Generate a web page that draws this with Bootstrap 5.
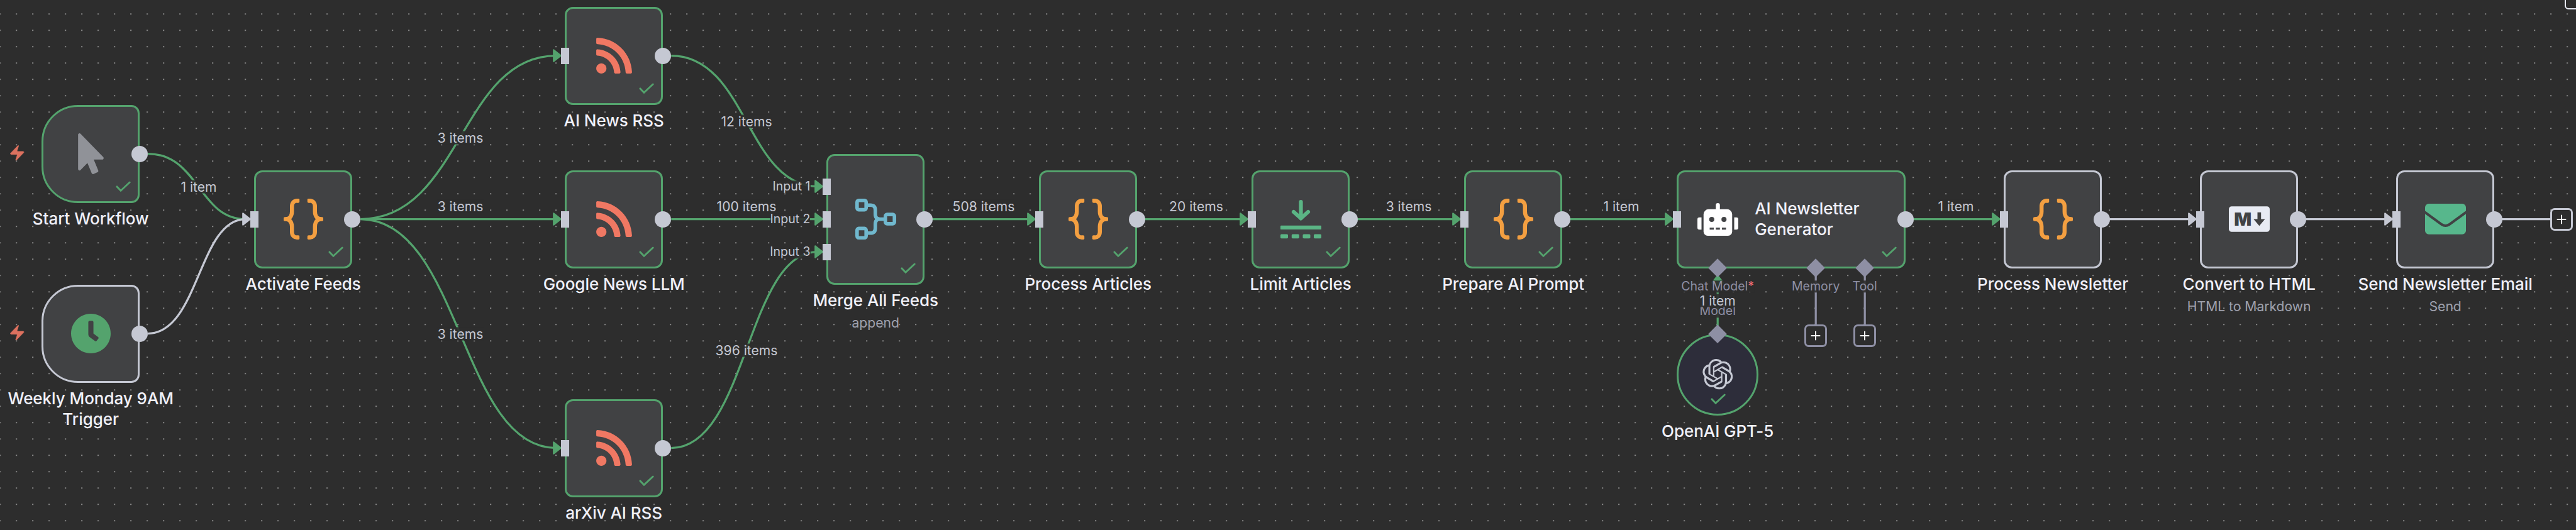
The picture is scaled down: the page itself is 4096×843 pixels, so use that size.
<!DOCTYPE html>
<html lang="en" data-bs-theme="dark">
<head>
<meta charset="utf-8">
<title>AI Newsletter Workflow</title>
<meta name="viewport" content="width=device-width, initial-scale=1">
<link href="https://cdn.jsdelivr.net/npm/bootstrap@5.3.0/dist/css/bootstrap.min.css" rel="stylesheet">
<style>
  :root { --u: 26px; --ok: #54a36d; --idle: #c5c8d3; --sub: #8e8fa4; --canvas: #2d2d2d; --face: #414244; }
  body { background: var(--canvas); font-family: Inter, "Liberation Sans", sans-serif; }
  .flow { width: 4096px; height: 843px; }
  .flow > svg.wires { width: 4096px; height: 843px; }
  .wires path.w { fill: none; stroke: var(--ok); stroke-width: 3.25; }
  .wires path.w.idle { stroke: var(--idle); }
  .wires path.w.sub { stroke: var(--sub); }
  /* nodes sit on a 26px grid */
  .step { left: calc(66.2px + var(--u) * var(--c)); top: calc(348.5px + var(--u) * var(--r)); width: 156px; height: 156px;
    margin-top: -78px; background: var(--face); border: 3px solid var(--ok); border-radius: 13px; }
  .step.idle { border-color: var(--idle); }
  .step.trigger { border-radius: 58px 13px 13px 58px; }
  .step.tall { height: 208px; margin-top: -104px; }
  .step.agent { width: 364px; }
  .step.disc { width: 130px; height: 130px; margin-top: 0; border-radius: 50%; background: #2d2d3a; }
  .name { top: calc(100% + 12.6px); left: 50%; transform: translateX(-50%); font-size: 26px; line-height: 32.5px; font-weight: 500; letter-spacing: -.05px; color: #f0f0f8; }
  .kind { font-size: 21.1px; line-height: 26px; font-weight: 400; letter-spacing: 0; color: #9fa1ad; margin-top: 6.5px; }
  .agent-title { font-size: 26px; line-height: 32.5px; font-weight: 500; color: #f0f0f8; }
  .out { width: 26px; height: 26px; right: -16px; top: calc(50% - 13px); background: var(--idle); }
  .in { width: 13px; height: 26px; left: -9.5px; top: calc(50% - 13px); background: var(--idle); }
  .tick { width: 24px; height: 18px; right: 11.6px; bottom: 13.2px; }
  .disc .tick { right: auto; left: 50%; margin-left: -11.6px; bottom: 14px; }
  .bolt { width: 28.5px; height: 28.5px; left: -56.5px; top: calc(50% - 15.5px); }
  .count, .port, .hint { font-size: 19.5px; line-height: 21px; color: var(--idle); background: rgba(45,45,45,.9); transform: translate(-50%,-50%); }
  .count { font-size: 21.1px; }
  .port { color: var(--sub); line-height: 19.5px; }
  .hint { transform: translate(-100%,-50%); line-height: 19.5px; }
  .plus { width: 36px; height: 36px; border: 3px solid var(--sub); border-radius: 7px; transform: translate(-50%,-50%); background: var(--canvas); }
  .plus.idle { border-color: var(--idle); }
  .gem { width: 20.8px; height: 20.8px; background: var(--sub); transform: translate(-50%,-50%) rotate(45deg); }
  .corner { left: 4078px; top: -22px; width: 38px; height: 36.5px; border: 2px solid #e6e9f2; border-radius: 6px; }
</style>
</head>
<body class="m-0 overflow-hidden">
<svg class="d-none" xmlns="http://www.w3.org/2000/svg">
  <symbol id="i-code" viewBox="0 0 63 65">
    <g fill="none" stroke="#f39f41" stroke-width="6.4">
      <path d="M23.6 3.3H21.5C16 3.3 13.2 7 13.2 12V20.5C13.2 27.5 9.5 32.5 3.2 32.5C9.5 32.5 13.2 37.5 13.2 44.5V53C13.2 58 16 61.7 21.5 61.7H23.6"/>
      <path d="M39.4 3.3H41.5C47 3.3 49.8 7 49.8 12V20.5C49.8 27.5 53.5 32.5 59.8 32.5C53.5 32.5 49.8 37.5 49.8 44.5V53C49.8 58 47 61.7 41.5 61.7H39.4"/>
    </g>
    <g fill="#f39f41"><rect y="29.3" width="9" height="6.4" rx="1.6"/><rect x="54" y="29.3" width="9" height="6.4" rx="1.6"/><rect x="20" y=".1" width="5.2" height="6.4" rx="1.4"/><rect x="20" y="58.5" width="5.2" height="6.4" rx="1.4"/><rect x="37.8" y=".1" width="5.2" height="6.4" rx="1.4"/><rect x="37.8" y="58.5" width="5.2" height="6.4" rx="1.4"/></g>
  </symbol>
  <symbol id="i-rss" viewBox="0 0 448 512"><path fill="#f07863" d="M128.081 415.959c0 35.369-28.672 64.041-64.041 64.041S0 451.328 0 415.959s28.672-64.041 64.041-64.041 64.04 28.673 64.04 64.041zm175.66 47.25c-8.354-154.6-132.185-278.587-286.95-286.95C7.656 175.765 0 183.105 0 192.253v48.069c0 8.415 6.49 15.472 14.887 16.018 111.832 7.284 201.473 96.702 208.772 208.772.547 8.397 7.604 14.887 16.018 14.887h48.069c9.149.001 16.489-7.655 15.995-16.79zm144.249.288C439.596 229.677 251.465 40.445 16.503 32.01 7.473 31.686 0 38.981 0 48.016v48.068c0 8.625 6.835 15.645 15.453 15.999 191.179 7.839 344.627 161.316 352.465 352.465.353 8.618 7.373 15.453 15.999 15.453h48.068c9.034-.001 16.329-7.474 16.005-16.504z"/></symbol>
  <symbol id="i-cursor" viewBox="0 0 320 512"><path fill="#909298" d="M302.189 329.126H196.105l55.831 135.993c3.889 9.428-.555 19.999-9.444 23.999l-49.165 21.427c-9.165 4-19.443-.571-23.332-9.714l-53.053-129.136-86.664 89.138C18.729 472.71 0 463.554 0 447.977V18.299C0 1.899 19.921-6.096 30.277 5.443l284.412 292.542c11.472 11.179 3.007 31.141-12.5 31.141z"/></symbol>
  <symbol id="i-clock" viewBox="0 0 512 512"><path fill="#54a36d" d="M256 8C119 8 8 119 8 256S119 504 256 504 504 393 504 256 393 8 256 8Zm92.49 313l-20 25a16 16 0 0 1-22.49 2.5l-67-49.72a40 40 0 0 1-15-31.23V112a16 16 0 0 1 16-16h32a16 16 0 0 1 16 16V256l58 42.5A16 16 0 0 1 348.49 321Z"/></symbol>
  <symbol id="i-merge" viewBox="0 0 65 65"><g fill="none" stroke="#70b8ce" stroke-width="5.6"><rect x="2.8" y="2.8" width="14.4" height="14.8" rx="2.6"/><rect x="2.8" y="47.4" width="14.4" height="14.8" rx="2.6"/><rect x="47.8" y="25.1" width="14.4" height="14.8" rx="2.6"/><path d="M19 10.2H24Q31.8 10.2 31.8 18V24.5Q31.8 32.5 39 32.5H46M19 54.8H24Q31.8 54.8 31.8 47V40.5Q31.8 32.5 39 32.5"/></g></symbol>
  <symbol id="i-limit" viewBox="0 0 65 65"><g fill="none" stroke="#5bb585" stroke-width="6.2" stroke-linecap="round"><path d="M32.5 5V31"/><path d="M21 21L32.5 31.2L44 21"/></g><g fill="#5bb585"><rect y="42.7" width="65" height="6.4" rx="1.2"/><rect y="56.5" width="12" height="6.7" rx="1.6"/><rect x="17.8" y="56.5" width="12" height="6.7" rx="1.6"/><rect x="35.5" y="56.5" width="12" height="6.7" rx="1.6"/><rect x="53" y="56.5" width="12" height="6.7" rx="1.6"/></g></symbol>
  <symbol id="i-robot" viewBox="0 0 640 512"><path fill="#fff" d="M32,224H64V416H32A31.96,31.96,0,0,1,0,384V256A31.96,31.96,0,0,1,32,224Zm512-48V448a64.06,64.06,0,0,1-64,64H160a64.06,64.06,0,0,1-64-64V176a79.974,79.974,0,0,1,80-80H288V32a32,32,0,0,1,64,0V96H464A79.974,79.974,0,0,1,544,176ZM264,256a40,40,0,1,0-40,40A39.997,39.997,0,0,0,264,256Zm-8,128H192v32h64Zm96,0H288v32h64ZM456,256a40,40,0,1,0-40,40A39.997,39.997,0,0,0,456,256Zm-8,128H384v32h64ZM640,256V384a31.96,31.96,0,0,1-32,32H576V224h32A31.96,31.96,0,0,1,640,256Z"/></symbol>
  <symbol id="i-md" viewBox="0 0 65 41"><rect width="65" height="40.6" y=".2" rx="4.5" fill="#e8ebf4"/><text x="8.2" y="31" textLength="28" lengthAdjust="spacingAndGlyphs" font-family="Inter, sans-serif" font-weight="900" font-size="29" fill="#414244">M</text><path fill="#414244" d="M45.5 9.8H51.2V20.4H57.5L48.4 31.2L39.3 20.4H45.5Z"/></symbol>
  <symbol id="i-mail" viewBox="0 0 65 49"><rect width="65" height="48.8" rx="6" fill="#57b78c"/><path fill="none" stroke="#414244" stroke-width="4" d="M-2 12.2L26.5 33Q32.5 37 38.5 33L67 12.2"/></symbol>
  <symbol id="i-openai" viewBox="0 0 24 24"><path fill="#c5c8d3" d="M22.2819 9.8211a5.9847 5.9847 0 0 0-.5157-4.9108 6.0462 6.0462 0 0 0-6.5098-2.9A6.0651 6.0651 0 0 0 4.9807 4.1818a5.9847 5.9847 0 0 0-3.9977 2.9 6.0462 6.0462 0 0 0 .7427 7.0966 5.98 5.98 0 0 0 .511 4.9107 6.051 6.051 0 0 0 6.5146 2.9001A5.9847 5.9847 0 0 0 13.2599 24a6.0557 6.0557 0 0 0 5.7718-4.2058 5.9894 5.9894 0 0 0 3.9977-2.9001 6.0557 6.0557 0 0 0-.7475-7.0729zm-9.022 12.6081a4.4755 4.4755 0 0 1-2.8764-1.0408l.1419-.0804 4.7783-2.7582a.7948.7948 0 0 0 .3927-.6813v-6.7369l2.02 1.1686a.071.071 0 0 1 .038.052v5.5826a4.504 4.504 0 0 1-4.4945 4.4944zm-9.6607-4.1254a4.4708 4.4708 0 0 1-.5346-3.0137l.142.0852 4.783 2.7582a.7712.7712 0 0 0 .7806 0l5.8428-3.3685v2.3324a.0804.0804 0 0 1-.0332.0615L9.74 19.9502a4.4992 4.4992 0 0 1-6.1408-1.6464zM2.3408 7.8956a4.485 4.485 0 0 1 2.3655-1.9728V11.6a.7664.7664 0 0 0 .3879.6765l5.8144 3.3543-2.0201 1.1685a.0757.0757 0 0 1-.071 0l-4.8303-2.7865A4.504 4.504 0 0 1 2.3408 7.872zm16.5963 3.8558L13.1038 8.364 15.1192 7.2a.0757.0757 0 0 1 .071 0l4.8303 2.7913a4.4944 4.4944 0 0 1-.6765 8.1042v-5.6772a.79.79 0 0 0-.407-.667zm2.0107-3.0231l-.142-.0852-4.7735-2.7818a.7759.7759 0 0 0-.7854 0L9.409 9.2297V6.8974a.0662.0662 0 0 1 .0284-.0615l4.8303-2.7866a4.4992 4.4992 0 0 1 6.6802 4.66zM8.3065 12.863l-2.02-1.1638a.0804.0804 0 0 1-.038-.0567V6.0742a4.4992 4.4992 0 0 1 7.3757-3.4537l-.142.0805L8.704 5.459a.7948.7948 0 0 0-.3927.6813zm1.0976-2.3654l2.602-1.4998 2.6069 1.4998v2.9994l-2.5974 1.4997-2.6067-1.4997Z"/></symbol>
  <symbol id="i-tick" viewBox="0 0 24 18"><path fill="none" stroke="#54a36d" stroke-width="2.9" stroke-linecap="round" d="M2 8.9L8 15.2L22.2 2"/></symbol>
  <symbol id="i-bolt" viewBox="0 0 24 24"><path fill="#dd715f" stroke="#dd715f" stroke-width=".6" d="M4 14a1 1 0 0 1-.78-1.63l9.9-10.2a.5.5 0 0 1 .86.46l-1.92 6.02A1 1 0 0 0 13 10h7a1 1 0 0 1 .78 1.63l-9.9 10.2a.5.5 0 0 1-.86-.46l1.92-6.02A1 1 0 0 0 11 14z"/></symbol>
  <symbol id="i-plus" viewBox="0 0 16 16"><path stroke="#fff" stroke-width="1.9" d="M8 .7V15.3M.7 8H15.3"/></symbol>
</svg>

<main class="flow position-relative overflow-hidden">
  <svg class="wires position-absolute top-0 start-0" viewBox="0 0 4096 843">
    <defs>
      <pattern id="dots" width="26" height="26" patternUnits="userSpaceOnUse" x="-13" y="9"><rect x="12" y="12.3" width="2.2" height="1.9" fill="#858585"/></pattern>
      <g id="tip"><path d="M-11.4-9.1L0 0L-11.4 9.1Z" stroke-width="2.3" stroke-linejoin="round"/></g>
    </defs>
    <rect width="4096" height="843" fill="url(#dots)"/>
    <path class="w" d="M235 244.5C316 244.5 316 348.5 390 348.5"/>
    <path class="w" d="M573.2 348.5C732.5 348.5 732.5 88.5 884 88.5M573.2 348.5H884M573.2 348.5C732.5 348.5 732.5 712.5 884 712.5"/>
    <path class="w" d="M1067.2 88.5C1187.5 88.5 1187.5 296.5 1300 296.5M1067.2 348.5H1300M1067.2 712.5C1187.5 712.5 1187.5 400.5 1300 400.5"/>
    <path class="w" d="M1480 348.5H1640M1818 348.5H1978M2156 348.5H2316M2494 348.5H2654M3040 348.5H3174M2731.2 436V532"/>
    <path class="w idle" d="M235 530.5C316 530.5 316 348.5 390 348.5M3340 348.5H3486M3652 348.5H3798M3964 348.5H4057"/>
    <path class="w sub" d="M2887.2 430V518M2965.2 430V518"/>
    <g fill="#54a36d" stroke="#54a36d">
      <use href="#tip" x="891.7" y="88.5"/><use href="#tip" x="891.7" y="348.5"/><use href="#tip" x="891.7" y="712.5"/>
      <use href="#tip" x="1307.7" y="296.5"/><use href="#tip" x="1307.7" y="348.5"/><use href="#tip" x="1307.7" y="400.5"/>
      <use href="#tip" x="1645.7" y="348.5"/><use href="#tip" x="1983.7" y="348.5"/><use href="#tip" x="2321.7" y="348.5"/><use href="#tip" x="2659.7" y="348.5"/><use href="#tip" x="3179.7" y="348.5"/>
      <use href="#tip" transform="translate(2731.2 438.5) rotate(-90)"/>
    </g>
    <g fill="#c5c8d3" stroke="#c5c8d3"><use href="#tip" x="397.7" y="348.5"/><use href="#tip" x="3491.7" y="348.5"/><use href="#tip" x="3803.7" y="348.5"/></g>
  </svg>

  <!-- item counts on the connections -->
  <span class="count position-absolute text-nowrap" style="left:316px;top:296.5px">1 item</span>
  <span class="count position-absolute text-nowrap" style="left:732px;top:218.5px">3 items</span>
  <span class="count position-absolute text-nowrap" style="left:732px;top:327.5px">3 items</span>
  <span class="count position-absolute text-nowrap" style="left:732px;top:530.5px">3 items</span>
  <span class="count position-absolute text-nowrap" style="left:1187px;top:192.5px">12 items</span>
  <span class="count position-absolute text-nowrap" style="left:1187px;top:327.5px">100 items</span>
  <span class="count position-absolute text-nowrap" style="left:1187px;top:556.5px">396 items</span>
  <span class="count position-absolute text-nowrap" style="left:1564px;top:327.5px">508 items</span>
  <span class="count position-absolute text-nowrap" style="left:1902px;top:327.5px">20 items</span>
  <span class="count position-absolute text-nowrap" style="left:2240px;top:327.5px">3 items</span>
  <span class="count position-absolute text-nowrap" style="left:2578px;top:327.5px">1 item</span>
  <span class="count position-absolute text-nowrap" style="left:3110px;top:327.5px">1 item</span>
  <span class="hint position-absolute text-nowrap" style="left:1288.5px;top:297px">Input 1</span>
  <span class="hint position-absolute text-nowrap" style="left:1288.5px;top:349px">Input 2</span>
  <span class="hint position-absolute text-nowrap" style="left:1288.5px;top:401px">Input 3</span>
  <span class="port position-absolute text-nowrap" style="left:2731.2px;top:455.5px">Chat Model<span style="color:#f06a70">*</span></span>
  <span class="port position-absolute text-nowrap" style="left:2731.2px;top:495px">Model</span>
  <span class="count position-absolute text-nowrap" style="left:2731.2px;top:478px">1 item</span>
  <span class="port position-absolute text-nowrap" style="left:2887.2px;top:455.5px">Memory</span>
  <span class="port position-absolute text-nowrap" style="left:2965.2px;top:455.5px">Tool</span>

  <section class="step trigger position-absolute d-flex align-items-center justify-content-center" style="--c:0;--r:-4">
    <svg class="bolt position-absolute"><use href="#i-bolt"/></svg>
    <svg width="65" height="65"><use href="#i-cursor"/></svg>
    <svg class="tick position-absolute"><use href="#i-tick"/></svg><i class="out position-absolute rounded-circle"></i>
    <div class="name position-absolute text-center text-nowrap">Start Workflow</div>
  </section>
  <section class="step trigger idle position-absolute d-flex align-items-center justify-content-center" style="--c:0;--r:7">
    <svg class="bolt position-absolute"><use href="#i-bolt"/></svg>
    <svg width="65" height="65"><use href="#i-clock"/></svg>
    <i class="out position-absolute rounded-circle"></i>
    <div class="name position-absolute text-center text-nowrap">Weekly Monday 9AM<br>Trigger</div>
  </section>
  <section class="step position-absolute d-flex align-items-center justify-content-center" style="--c:13;--r:0">
    <i class="in position-absolute"></i><svg width="63" height="65"><use href="#i-code"/></svg>
    <svg class="tick position-absolute"><use href="#i-tick"/></svg><i class="out position-absolute rounded-circle"></i>
    <div class="name position-absolute text-center text-nowrap">Activate Feeds</div>
  </section>
  <section class="step position-absolute d-flex align-items-center justify-content-center" style="--c:32;--r:-10">
    <i class="in position-absolute"></i><svg width="57" height="65"><use href="#i-rss"/></svg>
    <svg class="tick position-absolute"><use href="#i-tick"/></svg><i class="out position-absolute rounded-circle"></i>
    <div class="name position-absolute text-center text-nowrap">AI News RSS</div>
  </section>
  <section class="step position-absolute d-flex align-items-center justify-content-center" style="--c:32;--r:0">
    <i class="in position-absolute"></i><svg width="57" height="65"><use href="#i-rss"/></svg>
    <svg class="tick position-absolute"><use href="#i-tick"/></svg><i class="out position-absolute rounded-circle"></i>
    <div class="name position-absolute text-center text-nowrap">Google News LLM</div>
  </section>
  <section class="step position-absolute d-flex align-items-center justify-content-center" style="--c:32;--r:14">
    <i class="in position-absolute"></i><svg width="57" height="65"><use href="#i-rss"/></svg>
    <svg class="tick position-absolute"><use href="#i-tick"/></svg><i class="out position-absolute rounded-circle"></i>
    <div class="name position-absolute text-center text-nowrap">arXiv AI RSS</div>
  </section>
  <section class="step tall position-absolute d-flex align-items-center justify-content-center" style="--c:48;--r:0">
    <i class="in position-absolute" style="margin-top:-52px"></i><i class="in position-absolute"></i><i class="in position-absolute" style="margin-top:52px"></i>
    <svg width="65" height="65"><use href="#i-merge"/></svg>
    <svg class="tick position-absolute"><use href="#i-tick"/></svg><i class="out position-absolute rounded-circle"></i>
    <div class="name position-absolute text-center text-nowrap">Merge All Feeds<div class="kind">append</div></div>
  </section>
  <section class="step position-absolute d-flex align-items-center justify-content-center" style="--c:61;--r:0">
    <i class="in position-absolute"></i><svg width="63" height="65"><use href="#i-code"/></svg>
    <svg class="tick position-absolute"><use href="#i-tick"/></svg><i class="out position-absolute rounded-circle"></i>
    <div class="name position-absolute text-center text-nowrap">Process Articles</div>
  </section>
  <section class="step position-absolute d-flex align-items-center justify-content-center" style="--c:74;--r:0">
    <i class="in position-absolute"></i><svg width="65" height="65"><use href="#i-limit"/></svg>
    <svg class="tick position-absolute"><use href="#i-tick"/></svg><i class="out position-absolute rounded-circle"></i>
    <div class="name position-absolute text-center text-nowrap">Limit Articles</div>
  </section>
  <section class="step position-absolute d-flex align-items-center justify-content-center" style="--c:87;--r:0">
    <i class="in position-absolute"></i><svg width="63" height="65"><use href="#i-code"/></svg>
    <svg class="tick position-absolute"><use href="#i-tick"/></svg><i class="out position-absolute rounded-circle"></i>
    <div class="name position-absolute text-center text-nowrap">Prepare AI Prompt</div>
  </section>
  <section class="step agent position-absolute d-flex align-items-center" style="--c:100;--r:0">
    <i class="in position-absolute"></i><svg class="flex-shrink-0" style="margin-left:29.5px;margin-right:26.5px" width="65" height="52"><use href="#i-robot"/></svg>
    <div class="agent-title">AI Newsletter<br>Generator</div>
    <svg class="tick position-absolute"><use href="#i-tick"/></svg><i class="out position-absolute rounded-circle"></i>
  </section>
  <section class="step disc position-absolute d-flex align-items-center justify-content-center" style="--c:100;--r:7">
    <svg width="48.5" height="48.5"><use href="#i-openai"/></svg>
    <svg class="tick position-absolute"><use href="#i-tick"/></svg>
    <div class="name position-absolute text-center text-nowrap">OpenAI GPT-5</div>
  </section>
  <section class="step idle position-absolute d-flex align-items-center justify-content-center" style="--c:120;--r:0">
    <i class="in position-absolute"></i><svg width="63" height="65"><use href="#i-code"/></svg><i class="out position-absolute rounded-circle"></i>
    <div class="name position-absolute text-center text-nowrap">Process Newsletter</div>
  </section>
  <section class="step idle position-absolute d-flex align-items-center justify-content-center" style="--c:132;--r:0">
    <i class="in position-absolute"></i><svg width="65" height="41"><use href="#i-md"/></svg><i class="out position-absolute rounded-circle"></i>
    <div class="name position-absolute text-center text-nowrap">Convert to HTML<div class="kind">HTML to Markdown</div></div>
  </section>
  <section class="step idle position-absolute d-flex align-items-center justify-content-center" style="--c:144;--r:0">
    <i class="in position-absolute"></i><svg width="65" height="49"><use href="#i-mail"/></svg><i class="out position-absolute rounded-circle"></i>
    <div class="name position-absolute text-center text-nowrap">Send Newsletter Email<div class="kind">Send</div></div>
  </section>

  <i class="gem position-absolute" style="left:2731.2px;top:426.3px"></i>
  <i class="gem position-absolute" style="left:2887.2px;top:426.3px"></i>
  <i class="gem position-absolute" style="left:2965.2px;top:426.3px"></i>
  <i class="gem position-absolute" style="left:2731.2px;top:530.5px"></i>
  <span class="plus position-absolute d-flex align-items-center justify-content-center" style="left:2887.2px;top:533.5px"><svg width="16" height="16"><use href="#i-plus"/></svg></span>
  <span class="plus position-absolute d-flex align-items-center justify-content-center" style="left:2965.2px;top:533.5px"><svg width="16" height="16"><use href="#i-plus"/></svg></span>
  <span class="plus idle position-absolute d-flex align-items-center justify-content-center" style="left:4073.3px;top:348.5px"><svg width="16" height="16"><use href="#i-plus"/></svg></span>
  <i class="corner position-absolute"></i>
</main>
<script src="https://cdn.jsdelivr.net/npm/bootstrap@5.3.0/dist/js/bootstrap.bundle.min.js"></script>
</body>
</html>
